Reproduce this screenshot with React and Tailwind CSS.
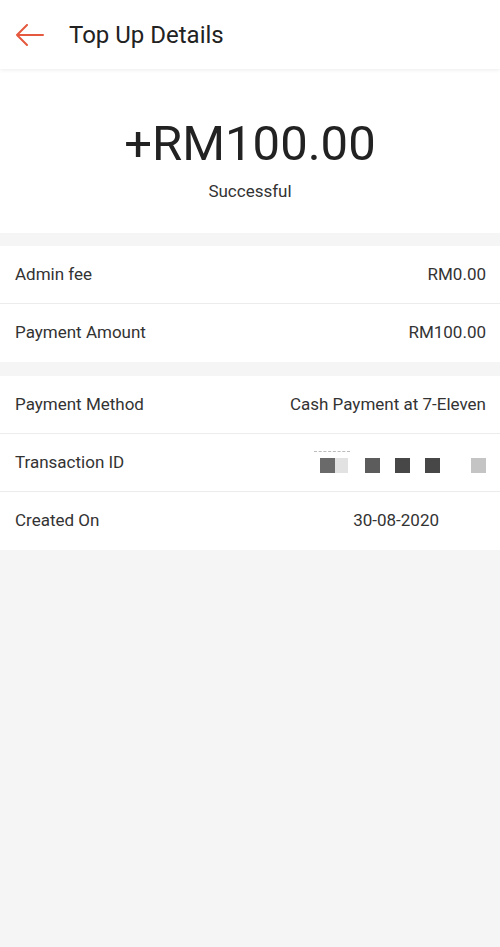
import React from "react";

const Row = ({ label, children, last }) => (
  <div
    className={`flex items-center justify-between h-[58px] pl-[15px] pr-[14px] text-[17px] text-[#333] ${
      last ? "" : "border-b border-[#ececec]"
    }`}
  >
    <span>{label}</span>
    <span className="flex items-center">{children}</span>
  </div>
);

const Masked = () => (
  <span className="relative flex items-center h-[20px] pt-[6px]">
    <span className="absolute top-[-2px] left-[-6px] w-[36px] border-t border-dashed border-[#bbb]" />
    <span className="w-[15px] h-[15px] bg-[#6a6a6a]" />
    <span className="w-[13px] h-[15px] bg-[#e2e2e2]" />
    <span className="w-[15px] h-[15px] bg-[#5c5c5c] ml-[17px]" />
    <span className="w-[15px] h-[15px] bg-[#474747] ml-[15px]" />
    <span className="w-[15px] h-[15px] bg-[#474747] ml-[15px]" />
    <span className="w-[15px] h-[15px] bg-[#c4c4c4] ml-[31px]" />
  </span>
);

export default function App() {
  return (
    <div
      className="min-h-[947px] bg-[#f5f5f5]"
      style={{ fontFamily: "Roboto, 'Noto Sans', sans-serif" }}
    >
      <header className="relative z-10 flex items-center h-[69px] bg-white shadow-[0_1px_4px_rgba(0,0,0,0.08)]">
        <button className="flex items-center justify-center w-[58px] h-full pl-[2px]">
          <svg width="30" height="22" viewBox="0 0 30 22" fill="none">
            <path
              d="M28 11H2M12 1L2 11l10 10"
              stroke="#e4593f"
              strokeWidth="2"
              strokeLinecap="round"
              strokeLinejoin="round"
            />
          </svg>
        </button>
        <h1 className="ml-[11px] text-[24px] text-[#222]">Top Up Details</h1>
      </header>

      <section className="flex flex-col items-center bg-white h-[164px] pt-[45px]">
        <div className="text-[49px] leading-[60px] text-[#222]">+RM100.00</div>
        <div className="mt-[5px] text-[17px] text-[#333]">Successful</div>
      </section>

      <section className="mt-[13px] bg-white">
        <Row label="Admin fee">RM0.00</Row>
        <Row label="Payment Amount" last>
          RM100.00
        </Row>
      </section>

      <section className="mt-[14px] bg-white">
        <Row label="Payment Method">Cash Payment at 7-Eleven</Row>
        <Row label="Transaction ID">
          <Masked />
        </Row>
        <Row label="Created On" last>
          <span className="mr-[47px]">30-08-2020</span>
        </Row>
      </section>
    </div>
  );
}
